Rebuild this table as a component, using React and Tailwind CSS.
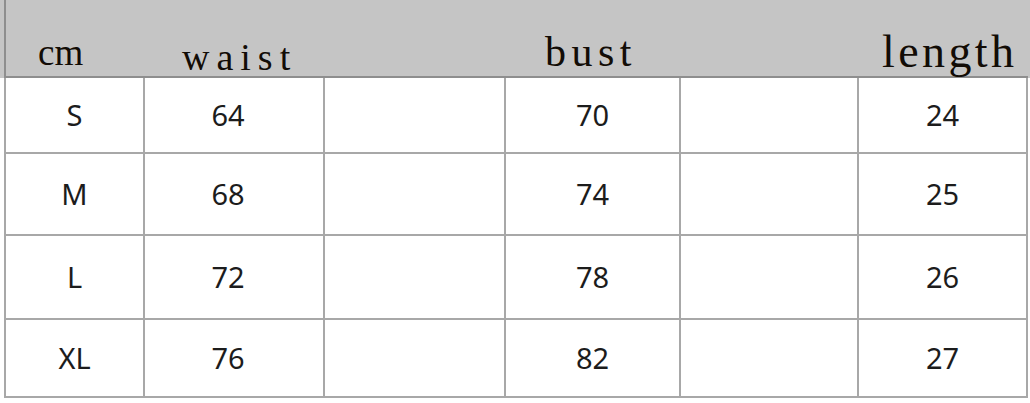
import React from 'react';

const cols = ['w-[139px]', 'w-[180px]', 'w-[181px]', 'w-[175px]', 'w-[178px]', 'w-[169px]'];

const rows = [
  { size: 'S', waist: '64', bust: '70', length: '24', h: 'h-[76px]' },
  { size: 'M', waist: '68', bust: '74', length: '25', h: 'h-[82px]' },
  { size: 'L', waist: '72', bust: '78', length: '26', h: 'h-[84px]' },
  { size: 'XL', waist: '76', bust: '82', length: '27', h: 'h-[78px]' },
];

const Cell = ({ w, className = '', children }) => (
  <div className={`${w} ${className} h-full flex items-center justify-center border-r-2 border-[#a8a8a8] shrink-0`}>
    {children}
  </div>
);

export default function App() {
  return (
    <div className="w-[1030px] h-[403px] bg-white overflow-hidden">
      {/* Header band */}
      <div className="h-[78px] bg-[#c5c5c5] pl-[4px]">
        <div className="h-full flex border-l-2 border-b-2 border-l-[#8e8e8e] border-b-[#8e8e8e] w-[1024px] leading-none whitespace-nowrap text-[#120c06] [font-family:'Liberation_Serif',serif]">
          <div className="w-[139px] pl-[32px] pt-[34px] text-[37px] shrink-0">cm</div>
          <div className="w-[180px] pl-[37px] pt-[38px] text-[38px] tracking-[7px] shrink-0">waist</div>
          <div className="w-[181px] shrink-0" />
          <div className="w-[175px] pl-[39px] pt-[31px] text-[42px] tracking-[5.5px] shrink-0">bust</div>
          <div className="w-[178px] shrink-0" />
          <div className="w-[169px] pl-[23px] pt-[29px] text-[46px] tracking-[3.4px] shrink-0">length</div>
        </div>
      </div>

      {/* Body rows */}
      <div className="pl-[4px]">
        <div className="w-[1024px] border-l-2 border-[#a8a8a8] text-[29px] text-[#1c1c1c] [font-family:'Noto_Sans',sans-serif]">
          {rows.map((r) => (
            <div key={r.size} className={`${r.h} flex border-b-2 border-[#a8a8a8]`}>
              <Cell w={cols[0]}>{r.size}</Cell>
              <Cell w={cols[1]} className="pr-[12px]">{r.waist}</Cell>
              <Cell w={cols[2]} />
              <Cell w={cols[3]}>{r.bust}</Cell>
              <Cell w={cols[4]} />
              <Cell w={cols[5]}>{r.length}</Cell>
            </div>
          ))}
        </div>
      </div>
    </div>
  );
}
